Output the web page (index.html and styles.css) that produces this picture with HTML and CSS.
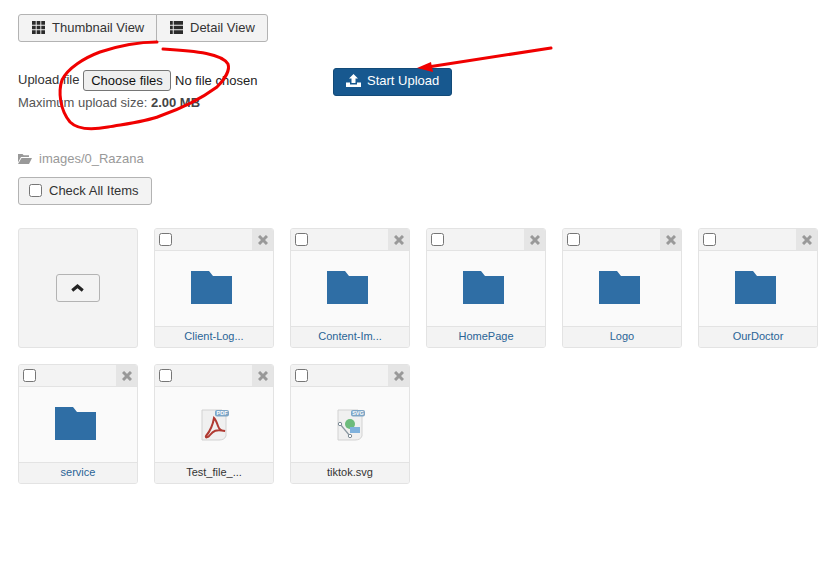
FILE: index.html
```html
<!DOCTYPE html>
<html lang="en">
<head>
<meta charset="utf-8">
<title>Media Manager</title>
<link rel="stylesheet" href="styles.css">
</head>
<body>
<div class="page">
  <div class="view-group">
    <button class="btn view-btn">
      <svg class="ico" viewBox="0 0 14 14"><path d="M0 0h4v4H0zM5 0h4v4H5zM10 0h4v4h-4zM0 5h4v4H0zM5 5h4v4H5zM10 5h4v4h-4zM0 10h4v4H0zM5 10h4v4H5zM10 10h4v4h-4z"/></svg>
      Thumbnail View
    </button>
    <button class="btn view-btn view-right">
      <svg class="ico" viewBox="0 0 14 14"><path d="M0 0h3v4H0zM4 0h10v4H4zM0 5h3v4H0zM4 5h10v4H4zM0 10h3v4H0zM4 10h10v4H4z"/></svg>
      Detail View
    </button>
  </div>

  <div class="upload">
    <div class="upload-left">
      <div class="file-row">
        <span class="file-label">Upload file</span>
        <span class="file-btn">Choose files</span>
        <span class="file-none">No file chosen</span>
      </div>
      <div class="max-size">Maximum upload size: <b>2.00 MB</b></div>
    </div>
    <button class="start">
      <svg class="ico-up" viewBox="0 0 15 13"><path d="M7.500 0l4.500 4.500H9.500V9h-4V4.500H3zM0 8.500h4V10.500h7V8.500h4V13H0z"/></svg>
      Start Upload
    </button>
  </div>

  <div class="path">
    <svg class="ico-path" viewBox="0 0 14 12"><path d="M0 1h4.500l1.200 1.300H11v1.700H3L0 9.500zM3.500 5H14L11 11H0z"/></svg>
    images/0_Razana
  </div>

  <div class="check-all"><span class="box"></span>Check All Items</div>

  <div class="grid">
    <div class="tile up-tile"><span class="up-btn"><svg class="chev" viewBox="0 0 14 9"><path d="M7 0l7 6-2.200 2.800L7 4.800 2.200 8.800 0 6z"/></svg></span></div>

    <div class="tile">
      <div class="tile-top"><span class="box"></span><span class="close"><svg class="x" viewBox="0 0 10 10"><path d="M1 1l8 8M9 1l-8 8"/></svg></span></div>
      <div class="tile-body folder-body"><svg class="folder" viewBox="0 0 41 33"><path d="M0 0h18l4 5h19v28H0z"/></svg></div>
      <div class="tile-name link">Client-Log...</div>
    </div>
    <div class="tile">
      <div class="tile-top"><span class="box"></span><span class="close"><svg class="x" viewBox="0 0 10 10"><path d="M1 1l8 8M9 1l-8 8"/></svg></span></div>
      <div class="tile-body folder-body"><svg class="folder" viewBox="0 0 41 33"><path d="M0 0h18l4 5h19v28H0z"/></svg></div>
      <div class="tile-name link">Content-Im...</div>
    </div>
    <div class="tile">
      <div class="tile-top"><span class="box"></span><span class="close"><svg class="x" viewBox="0 0 10 10"><path d="M1 1l8 8M9 1l-8 8"/></svg></span></div>
      <div class="tile-body folder-body"><svg class="folder" viewBox="0 0 41 33"><path d="M0 0h18l4 5h19v28H0z"/></svg></div>
      <div class="tile-name link">HomePage</div>
    </div>
    <div class="tile">
      <div class="tile-top"><span class="box"></span><span class="close"><svg class="x" viewBox="0 0 10 10"><path d="M1 1l8 8M9 1l-8 8"/></svg></span></div>
      <div class="tile-body folder-body"><svg class="folder" viewBox="0 0 41 33"><path d="M0 0h18l4 5h19v28H0z"/></svg></div>
      <div class="tile-name link">Logo</div>
    </div>
    <div class="tile">
      <div class="tile-top"><span class="box"></span><span class="close"><svg class="x" viewBox="0 0 10 10"><path d="M1 1l8 8M9 1l-8 8"/></svg></span></div>
      <div class="tile-body folder-body"><svg class="folder" viewBox="0 0 41 33"><path d="M0 0h18l4 5h19v28H0z"/></svg></div>
      <div class="tile-name link">OurDoctor</div>
    </div>
    <div class="tile">
      <div class="tile-top"><span class="box"></span><span class="close"><svg class="x" viewBox="0 0 10 10"><path d="M1 1l8 8M9 1l-8 8"/></svg></span></div>
      <div class="tile-body folder-body"><svg class="folder" viewBox="0 0 41 33"><path d="M0 0h18l4 5h19v28H0z"/></svg></div>
      <div class="tile-name link">service</div>
    </div>
    <div class="tile">
      <div class="tile-top"><span class="box"></span><span class="close"><svg class="x" viewBox="0 0 10 10"><path d="M1 1l8 8M9 1l-8 8"/></svg></span></div>
      <div class="tile-body">
        <svg class="doc" viewBox="0 0 32 32">
          <path d="M4 1h20l4 5v21c-1 3-4 4-7 4H4z" fill="#f0f0f0" stroke="#d2d2d2"/>
          <path d="M16 9c-1 6-3 12-8 18-1 2 2 2 4-1 3-4 6-6 15-4-4 0-6-2-7-5-1-3-2-6-4-8z" fill="none" stroke="#b03a32" stroke-width="2"/>
          <rect x="17" y="1" width="14" height="6.500" rx="2" fill="#7ea6c6"/>
          <text x="24" y="6.300" class="doc-text">PDF</text>
        </svg>
      </div>
      <div class="tile-name">Test_file_...</div>
    </div>
    <div class="tile">
      <div class="tile-top"><span class="box"></span><span class="close"><svg class="x" viewBox="0 0 10 10"><path d="M1 1l8 8M9 1l-8 8"/></svg></span></div>
      <div class="tile-body">
        <svg class="doc" viewBox="0 0 32 32">
          <path d="M4 1h20l4 5v21c-1 3-4 4-7 4H4z" fill="#f0f0f0" stroke="#d2d2d2"/>
          <path d="M6 15l10 12" stroke="#8a97a0" stroke-width="1.200"/>
          <circle cx="6" cy="15" r="1.700" fill="#fff" stroke="#7b8a95"/>
          <circle cx="16" cy="27" r="1.700" fill="#fff" stroke="#7b8a95"/>
          <circle cx="16" cy="15" r="5" fill="#6cbb7c"/>
          <rect x="16" y="18" width="10" height="6" fill="#7fb1dc"/>
          <rect x="17" y="1" width="14" height="6.500" rx="2" fill="#7ea6c6"/>
          <text x="24" y="6.300" class="doc-text">SVG</text>
        </svg>
      </div>
      <div class="tile-name">tiktok.svg</div>
    </div>
  </div>
</div>

<svg class="marks" viewBox="0 0 834 563">
  <path class="mark" d="M157 42C140 42 118 46 100 52 84 58 68 68 62 80 58 92 60 110 70 122 78 130 92 130 108 127 125 124 145 122 160 116 180 109 202 98 217 87 225 79 230 70 228 64 222 54 198 51 163 49"/>
  <path class="mark" d="M551 48L428 67"/>
  <path class="arrow" d="M417 68L431 62 433 72z"/>
</svg>
</body>
</html>
```

FILE: styles.css
```css
* { box-sizing: border-box; }
html, body { margin: 0; padding: 0; }
body {
  background: #fff;
  font-family: "Liberation Sans", Arial, sans-serif;
  font-size: 13px;
  line-height: 18px;
  color: #333;
  height: 563px;
  overflow: hidden;
}
.page { padding: 14px 16px 0 18px; }

.view-group { display: flex; height: 28px; }
.btn {
  font: inherit;
  color: #333;
  background: #f3f3f3;
  border: 1px solid #b3b3b3;
  display: flex;
  align-items: center;
  padding: 0 0 1px 0;
}
.view-btn { height: 28px; padding-left: 13px; border-radius: 3px 0 0 3px; width: 139px; gap: 7px; }
.view-right { width: 112px; margin-left: -1px; border-radius: 0 3px 3px 0; }
.ico { width: 13px; height: 13px; fill: #2b2b2b; margin-bottom: 1px; }

.upload { display: flex; margin-top: 27px; height: 46px; }
.upload-left { width: 315px; }
.file-row { display: flex; align-items: center; height: 23px; }
.file-label { white-space: nowrap; color: #333; width: 65px; padding-bottom: 2px; }
.file-btn {
  color: #111;
  background: #efefef;
  border: 1px solid #767676;
  border-radius: 3px;
  height: 21px;
  line-height: 19px;
  width: 88px;
  text-align: center;
}
.file-none { margin-left: 4px; color: #222; }
.max-size { margin-top: 1px; color: #555; line-height: 20px; }
.max-size b { color: #444; }
.start {
  font: inherit;
  color: #fff;
  background: #17588f;
  border: 1px solid #124a78;
  border-radius: 3px;
  width: 119px;
  height: 28px;
  margin-top: -1px;
  display: flex;
  align-items: center;
  padding: 0 0 2px 12px;
  gap: 6px;
}
.ico-up { width: 15px; height: 13px; fill: #fff; margin-bottom: 1px; }

.path {
  margin-top: 35px;
  display: flex;
  align-items: center;
  gap: 7px;
  color: #999;
  height: 18px;
}
.ico-path { width: 14px; height: 12px; fill: #999; }

.check-all {
  margin-top: 9px;
  width: 134px;
  height: 28px;
  background: #f3f3f3;
  border: 1px solid #b3b3b3;
  border-radius: 3px;
  display: flex;
  align-items: center;
  padding-left: 10px;
  padding-bottom: 1px;
  gap: 7px;
}
.box {
  display: block;
  width: 13px;
  height: 13px;
  background: #fff;
  border: 1px solid #767676;
  border-radius: 2.500px;
}

.grid {
  margin-top: 23px;
  display: grid;
  grid-template-columns: repeat(6, 120px);
  grid-auto-rows: 120px;
  gap: 16px;
}
.tile {
  background: #fafafa;
  border: 1px solid #e3e3e3;
  border-radius: 3px;
  display: flex;
  flex-direction: column;
  overflow: hidden;
}
.up-tile { background: #f3f3f3; align-items: center; justify-content: center; }
.up-btn {
  width: 44px;
  height: 28px;
  border: 1px solid #b3b3b3;
  border-radius: 3px;
  display: flex;
  align-items: center;
  justify-content: center;
}
.chev { width: 13px; height: 8px; fill: #222; margin: 0 2px 1px 0; }
.tile-top {
  height: 22px;
  background: #f3f3f3;
  border-bottom: 1px solid #e3e3e3;
  display: flex;
  align-items: center;
  justify-content: space-between;
  padding-left: 4px;
  flex: none;
}
.close {
  width: 21px;
  height: 21px;
  background: #e5e5e5;
  display: flex;
  align-items: center;
  justify-content: center;
  padding-left: 1px;
}
.x { width: 10px; height: 10px; fill: none; stroke: #999; stroke-width: 3; }
.tile-body { flex: 1; display: flex; align-items: center; justify-content: center; }
.folder-body { padding: 0 5px 2px 0; }
.folder { width: 41px; height: 33px; fill: #2f6ea5; }
.doc { width: 32px; height: 32px; }
.doc-text { font-family: "Liberation Sans", Arial, sans-serif; font-size: 5.500px; font-weight: bold; fill: #fff; text-anchor: middle; }
.tile-name {
  height: 21px;
  flex: none;
  background: #f3f3f3;
  border-top: 1px solid #e3e3e3;
  font-size: 11px;
  line-height: 18px;
  text-align: center;
  color: #333;
}
.tile-name.link { color: #2a6496; }

.marks { position: absolute; left: 0; top: 0; width: 834px; height: 563px; pointer-events: none; }
.mark { fill: none; stroke: #f00000; stroke-width: 3; stroke-linecap: round; stroke-linejoin: round; }
.arrow { fill: #f00000; }
```
